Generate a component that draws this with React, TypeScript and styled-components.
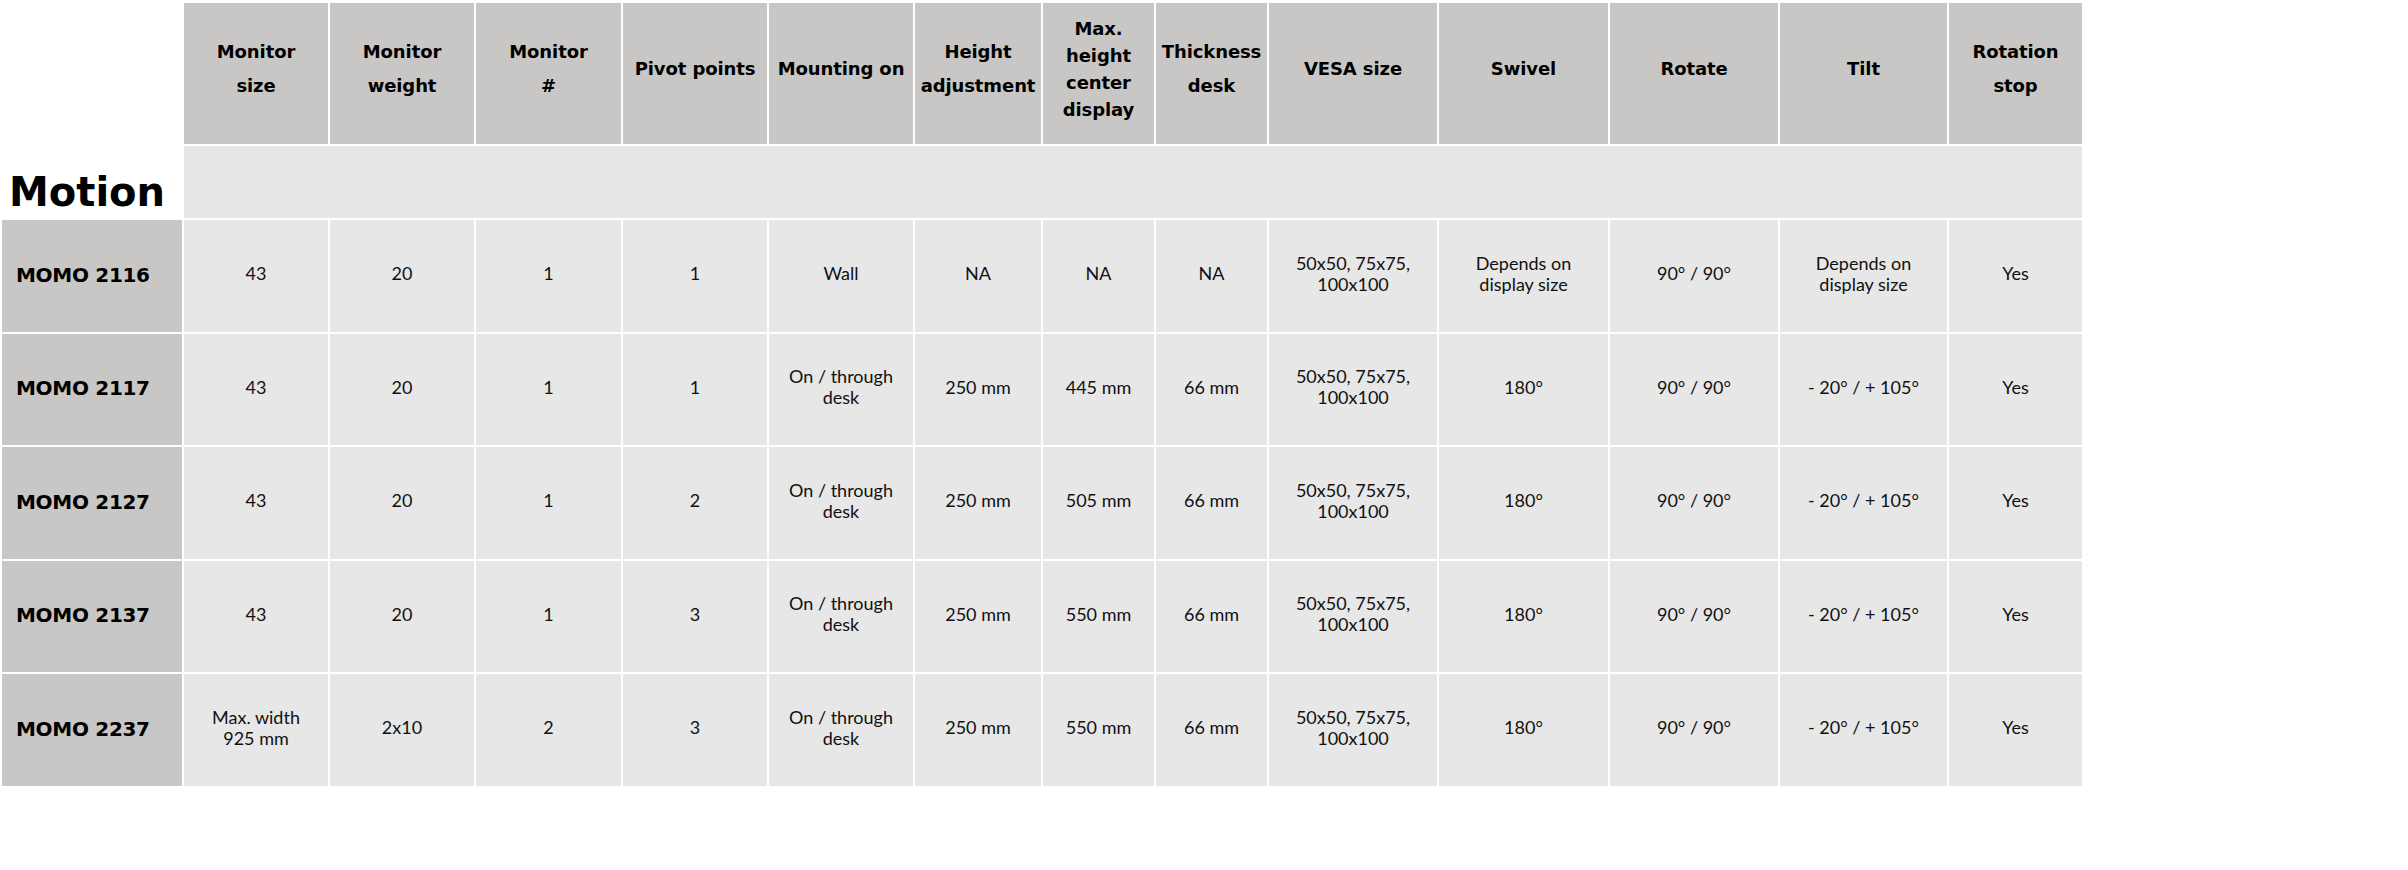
import styled, { createGlobalStyle } from 'styled-components';

const GlobalStyle = createGlobalStyle`
  html, body {
    margin: 0;
    padding: 0;
    background: #ffffff;
  }
`;

type Cell = string | string[];

type Row = {
  name: string;
  values: Cell[];
};

const columnWidths = [180, 144, 144, 145, 144, 144, 126, 111, 111, 168, 169, 168, 167, 133];

const headers: string[][] = [
  ['Monitor', 'size'],
  ['Monitor', 'weight'],
  ['Monitor', '#'],
  ['Pivot points'],
  ['Mounting on'],
  ['Height', 'adjustment'],
  ['Max.', 'height', 'center', 'display'],
  ['Thickness', 'desk'],
  ['VESA size'],
  ['Swivel'],
  ['Rotate'],
  ['Tilt'],
  ['Rotation', 'stop'],
];

const vesa = ['50x50, 75x75,', '100x100'];
const depends = ['Depends on', 'display size'];
const desk = ['On / through', 'desk'];

const rows: Row[] = [
  {
    name: 'MOMO 2116',
    values: ['43', '20', '1', '1', 'Wall', 'NA', 'NA', 'NA', vesa, depends, '90° / 90°', depends, 'Yes'],
  },
  {
    name: 'MOMO 2117',
    values: ['43', '20', '1', '1', desk, '250 mm', '445 mm', '66 mm', vesa, '180°', '90° / 90°', '- 20° / + 105°', 'Yes'],
  },
  {
    name: 'MOMO 2127',
    values: ['43', '20', '1', '2', desk, '250 mm', '505 mm', '66 mm', vesa, '180°', '90° / 90°', '- 20° / + 105°', 'Yes'],
  },
  {
    name: 'MOMO 2137',
    values: ['43', '20', '1', '3', desk, '250 mm', '550 mm', '66 mm', vesa, '180°', '90° / 90°', '- 20° / + 105°', 'Yes'],
  },
  {
    name: 'MOMO 2237',
    values: [
      ['Max. width', '925 mm'],
      '2x10',
      '2',
      '3',
      desk,
      '250 mm',
      '550 mm',
      '66 mm',
      vesa,
      '180°',
      '90° / 90°',
      '- 20° / + 105°',
      'Yes',
    ],
  },
];

function Lines({ cell }: { cell: Cell }) {
  const lines = Array.isArray(cell) ? cell : [cell];
  return (
    <>
      {lines.map((line, i) => (
        <span key={i}>
          {i > 0 && <br />}
          {line}
        </span>
      ))}
    </>
  );
}

export default function App() {
  return (
    <>
      <GlobalStyle />
      <Table>
        <colgroup>
          {columnWidths.map((w, i) => (
            <col key={i} style={{ width: w }} />
          ))}
        </colgroup>
        <thead>
          <tr>
            <CornerCell />
            {headers.map((lines, i) => (
              <HeadCell key={i} $dense={lines.length > 2}>
                <Lines cell={lines} />
              </HeadCell>
            ))}
          </tr>
        </thead>
        <tbody>
          <SectionRow>
            <SectionTitle>Motion</SectionTitle>
            <SectionFill colSpan={headers.length} />
          </SectionRow>
          {rows.map((row) => (
            <DataRow key={row.name}>
              <LabelCell>{row.name}</LabelCell>
              {row.values.map((value, i) => (
                <DataCell key={i}>
                  <Lines cell={value} />
                </DataCell>
              ))}
            </DataRow>
          ))}
        </tbody>
      </Table>
    </>
  );
}

const Table = styled.table`
  table-layout: fixed;
  border-collapse: separate;
  border-spacing: 2px;
  width: 2084px;
  margin: 1px 0 0;
  color: #000000;
`;

const CornerCell = styled.th`
  background: #ffffff;
  height: 141px;
  padding: 0;
`;

const HeadCell = styled.th<{ $dense?: boolean }>`
  background: #c8c7c5;
  height: 141px;
  padding: 0 4px 10px;
  box-sizing: border-box;
  font-family: 'DejaVu Sans', 'Liberation Sans', sans-serif;
  font-weight: 700;
  font-size: 18px;
  line-height: ${({ $dense }) => ($dense ? '27px' : '34px')};
  text-align: center;
  vertical-align: middle;
  letter-spacing: -0.1px;
  white-space: nowrap;
`;

const SectionRow = styled.tr`
  height: 72px;
`;

const SectionTitle = styled.td`
  background: #ffffff;
  padding: 0 0 6px 7px;
  font-family: 'DejaVu Sans', 'Liberation Sans', sans-serif;
  font-weight: 700;
  font-size: 40px;
  line-height: 1;
  vertical-align: bottom;
  white-space: nowrap;
`;

const SectionFill = styled.td`
  background: #e7e7e7;
  padding: 0;
`;

const DataRow = styled.tr`
  height: 111.5px;
`;

const LabelCell = styled.td`
  background: #c8c7c5;
  padding: 0 0 2px 14px;
  font-family: 'DejaVu Sans', 'Liberation Sans', sans-serif;
  font-weight: 700;
  font-size: 20px;
  letter-spacing: -0.3px;
  vertical-align: middle;
  white-space: nowrap;
`;

const DataCell = styled.td`
  background: #e7e7e7;
  padding: 0 2px 4px;
  font-family: Lato, 'Liberation Sans', sans-serif;
  font-weight: 400;
  font-size: 18px;
  line-height: 21px;
  color: #111111;
  text-align: center;
  vertical-align: middle;
  white-space: nowrap;
`;
